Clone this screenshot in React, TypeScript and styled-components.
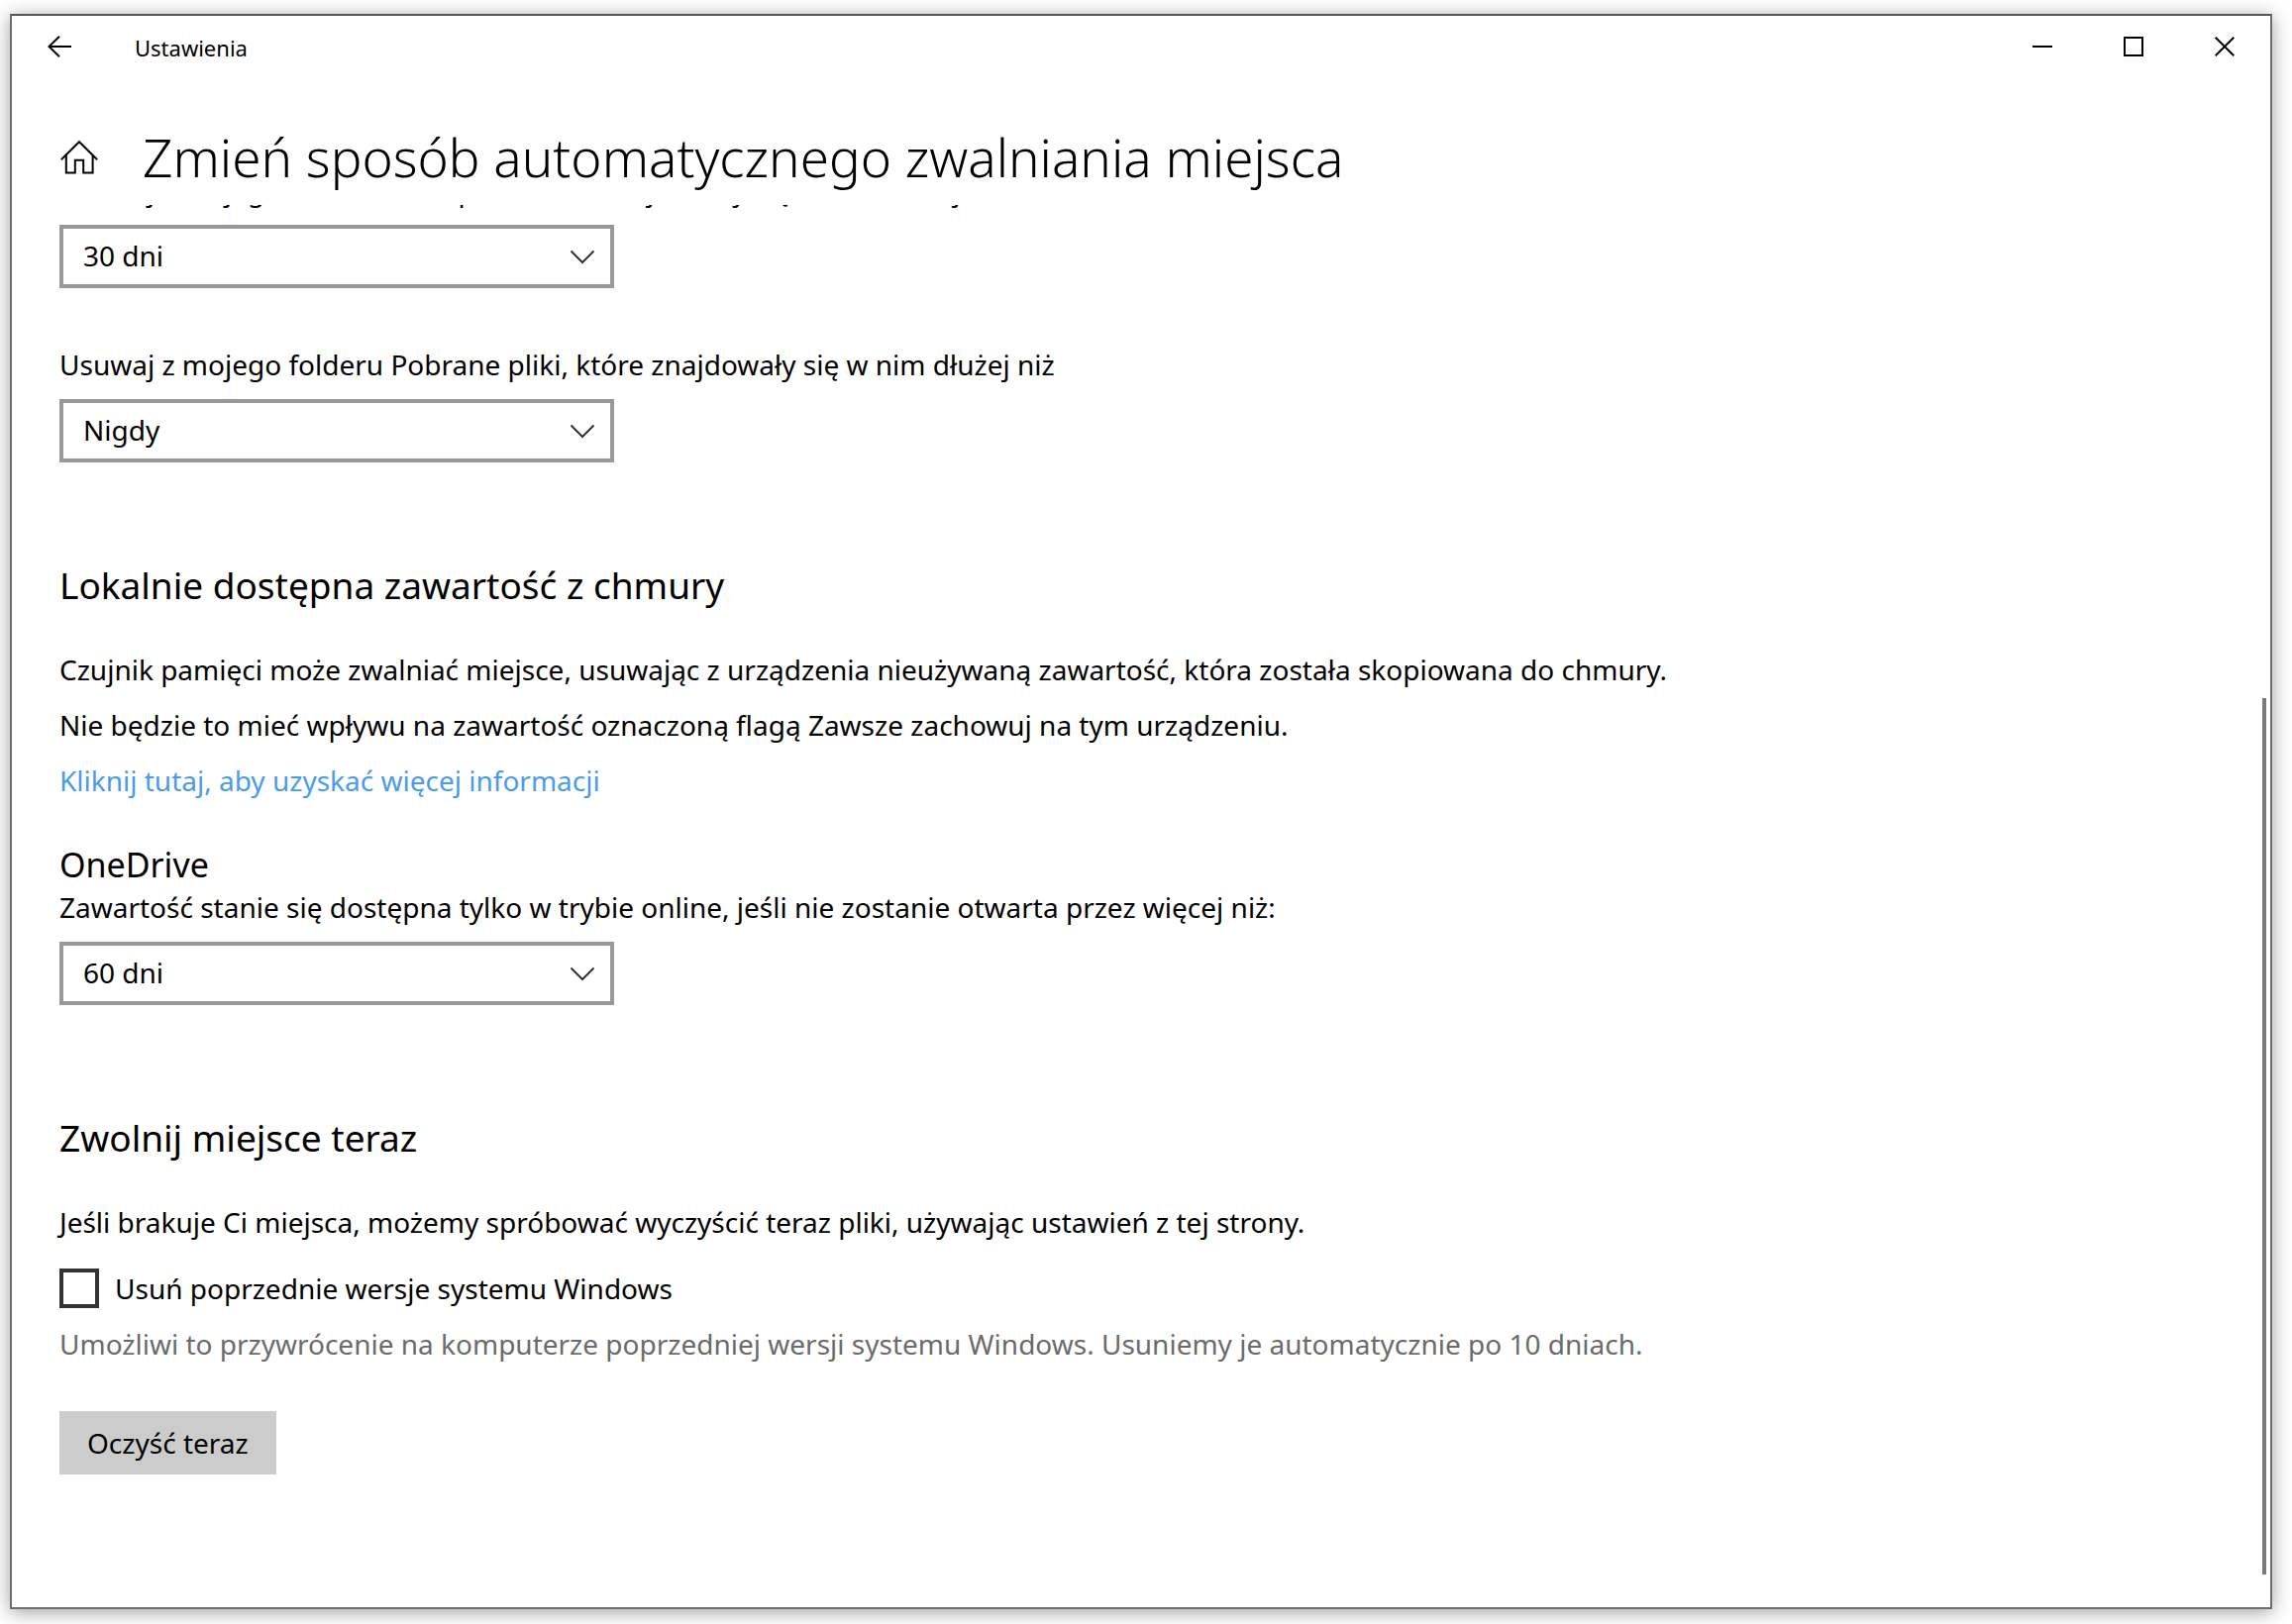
import React, { useId } from "react";
import styled, { createGlobalStyle } from "styled-components";

const GlobalStyle = createGlobalStyle`
  *, *::before, *::after { box-sizing: border-box; }
  body {
    margin: 0;
    background: #fff;
    color: #000;
    font: 400 28px/40px "Noto Sans", "Open Sans", sans-serif;
  }
  h1, h2, h3, p { margin: 0; font-weight: 400; }
  button, select { font: inherit; color: inherit; border: 0; border-radius: 0; cursor: pointer; }
`;

const Desktop = styled.div`
  display: flex;
  min-height: 100vh;
  padding: 14px 20px 15px 10px;
`;

const Window = styled.div`
  flex: 1;
  min-width: 0;
  display: flex;
  flex-direction: column;
  background: #fff;
  border: 2px solid #6e6e6e;
  border-top-color: #555;
  box-shadow: 0 3px 18px rgba(0, 0, 0, 0.38);
`;

const TitleBar = styled.div`
  display: flex;
  align-items: center;
  height: 62px;
`;

const BarButton = styled.button<{ $width: number }>`
  display: grid;
  place-items: center;
  width: ${(p) => p.$width}px;
  height: 100%;
  padding: 0;
  background: transparent;
`;

const AppName = styled.span`
  flex: 1;
  padding: 2px 0 0 28px;
  font-size: 22px;
`;

const Header = styled.header`
  display: flex;
  align-items: center;
  gap: 44px;
  padding: 45px 48px 12px;
`;

const HomeButton = styled.button`
  display: flex;
  padding: 0;
  background: transparent;
`;

const Title = styled.h1`
  font-size: 53px;
  line-height: 72px;
  font-weight: 300;
`;

const Icon = styled.svg`
  display: block;
  fill: none;
  stroke: #000;
  stroke-width: 2px;
`;

const Body = styled.div`
  flex: 1;
  display: flex;
  overflow: hidden;
`;

/* The page is scrolled down so that its first label sits mostly under the header. */
const Content = styled.main`
  flex: 1;
  min-width: 0;
  margin-top: -35px;
  padding: 0 48px 48px;
`;

const Track = styled.div`
  display: flex;
  flex-direction: column;
  justify-content: flex-end;
  width: 4px;
  margin: 0 4px 33px 0;
`;

const Thumb = styled.div`
  height: 64%;
  background: #7a7a7a;
`;

const FieldList = styled.div`
  display: grid;
  gap: 57px;
`;

const Field = styled.div`
  display: grid;
  gap: 15px;
`;

const SelectBox = styled.div`
  position: relative;
  max-width: 560px;
`;

const Select = styled.select`
  display: block;
  width: 100%;
  height: 64px;
  padding: 0 60px 2px 20px;
  appearance: none;
  background: #fff;
  border: 4px solid #999;
`;

const Chevron = styled(Icon)`
  position: absolute;
  right: 19px;
  top: 25px;
  stroke: #333;
  pointer-events: none;
`;

const Section = styled.section<{ $gap: number }>`
  margin-top: ${(p) => p.$gap}px;
`;

const SectionTitle = styled.h2`
  margin-bottom: 41px;
  font-size: 37px;
  line-height: 48px;
`;

const Paragraphs = styled.div`
  display: grid;
  justify-items: start;
  gap: 16px;
`;

const Link = styled.a`
  color: #4a9bea;
  text-decoration: none;
`;

const SubTitle = styled.h3`
  margin-top: 42px;
  font-size: 34px;
  line-height: 46px;
`;

const CheckRow = styled.label`
  display: flex;
  align-items: center;
  gap: 16px;
  margin: 27px 0 16px;
`;

const Checkbox = styled.input`
  width: 40px;
  height: 40px;
  margin: 0;
  appearance: none;
  background: #fff;
  border: 4px solid #333;

  &:checked {
    background: #333;
  }
`;

const Hint = styled.p`
  color: #6b6b6b;
`;

const ActionButton = styled.button`
  height: 64px;
  margin-top: 48px;
  padding: 0 28px;
  background: #ccc;
`;

function SelectField({ label, value, options }: { label: string; value: string; options: string[] }) {
  const id = useId();
  return (
    <Field>
      <label htmlFor={id}>{label}</label>
      <SelectBox>
        <Select id={id} defaultValue={value}>
          {options.map((o) => (
            <option key={o}>{o}</option>
          ))}
        </Select>
        <Chevron width="26" height="15" viewBox="0 0 26 15" aria-hidden="true">
          <path d="M1.5 1.5 13 13 24.5 1.5" />
        </Chevron>
      </SelectBox>
    </Field>
  );
}

const PERIODS = ["Nigdy", "1 dzień", "14 dni", "30 dni", "60 dni"];

export default function App() {
  return (
    <Desktop>
      <GlobalStyle />
      <Window>
        <TitleBar>
          <BarButton type="button" $width={96} aria-label="Wstecz">
            <Icon width="24" height="22" viewBox="0 0 24 22">
              <path d="M24 11H1.5M12 .8 1.5 11 12 21.2" />
            </Icon>
          </BarButton>
          <AppName>Ustawienia</AppName>
          <BarButton type="button" $width={92} aria-label="Minimalizuj">
            <Icon width="20" height="20" viewBox="0 0 20 20">
              <path d="M0 10H20" />
            </Icon>
          </BarButton>
          <BarButton type="button" $width={92} aria-label="Maksymalizuj">
            <Icon width="20" height="20" viewBox="0 0 20 20">
              <path d="M1 1H19V19H1Z" />
            </Icon>
          </BarButton>
          <BarButton type="button" $width={92} aria-label="Zamknij">
            <Icon width="20" height="20" viewBox="0 0 20 20">
              <path d="M.7.7 19.3 19.3M19.3.7.7 19.3" />
            </Icon>
          </BarButton>
        </TitleBar>

        <Header>
          <HomeButton type="button" aria-label="Strona główna">
            <Icon width="40" height="40" viewBox="0 0 40 40">
              <path d="M1.8 22.2 20 4.2 38.2 22.2M6.8 18V35.4H15.8V22.8H24.2V35.4H33.6V18" />
            </Icon>
          </HomeButton>
          <Title>Zmień sposób automatycznego zwalniania miejsca</Title>
        </Header>

        <Body>
          <Content>
            <FieldList>
              <SelectField
                label="Usuwaj z mojego folderu Kosz pliki, które znajdowały się w nim dłużej niż"
                value="30 dni"
                options={PERIODS}
              />
              <SelectField
                label="Usuwaj z mojego folderu Pobrane pliki, które znajdowały się w nim dłużej niż"
                value="Nigdy"
                options={PERIODS}
              />
            </FieldList>

            <Section $gap={100}>
              <SectionTitle>Lokalnie dostępna zawartość z chmury</SectionTitle>
              <Paragraphs>
                <p>
                  Czujnik pamięci może zwalniać miejsce, usuwając z urządzenia nieużywaną zawartość, która została
                  skopiowana do chmury.
                </p>
                <p>Nie będzie to mieć wpływu na zawartość oznaczoną flagą Zawsze zachowuj na tym urządzeniu.</p>
                <Link href="#">Kliknij tutaj, aby uzyskać więcej informacji</Link>
              </Paragraphs>
              <SubTitle>OneDrive</SubTitle>
              <SelectField
                label="Zawartość stanie się dostępna tylko w trybie online, jeśli nie zostanie otwarta przez więcej niż:"
                value="60 dni"
                options={PERIODS}
              />
            </Section>

            <Section $gap={110}>
              <SectionTitle>Zwolnij miejsce teraz</SectionTitle>
              <p>Jeśli brakuje Ci miejsca, możemy spróbować wyczyścić teraz pliki, używając ustawień z tej strony.</p>
              <CheckRow>
                <Checkbox type="checkbox" />
                Usuń poprzednie wersje systemu Windows
              </CheckRow>
              <Hint>
                Umożliwi to przywrócenie na komputerze poprzedniej wersji systemu Windows. Usuniemy je automatycznie po
                10 dniach.
              </Hint>
              <ActionButton type="button">Oczyść teraz</ActionButton>
            </Section>
          </Content>
          <Track>
            <Thumb />
          </Track>
        </Body>
      </Window>
    </Desktop>
  );
}
